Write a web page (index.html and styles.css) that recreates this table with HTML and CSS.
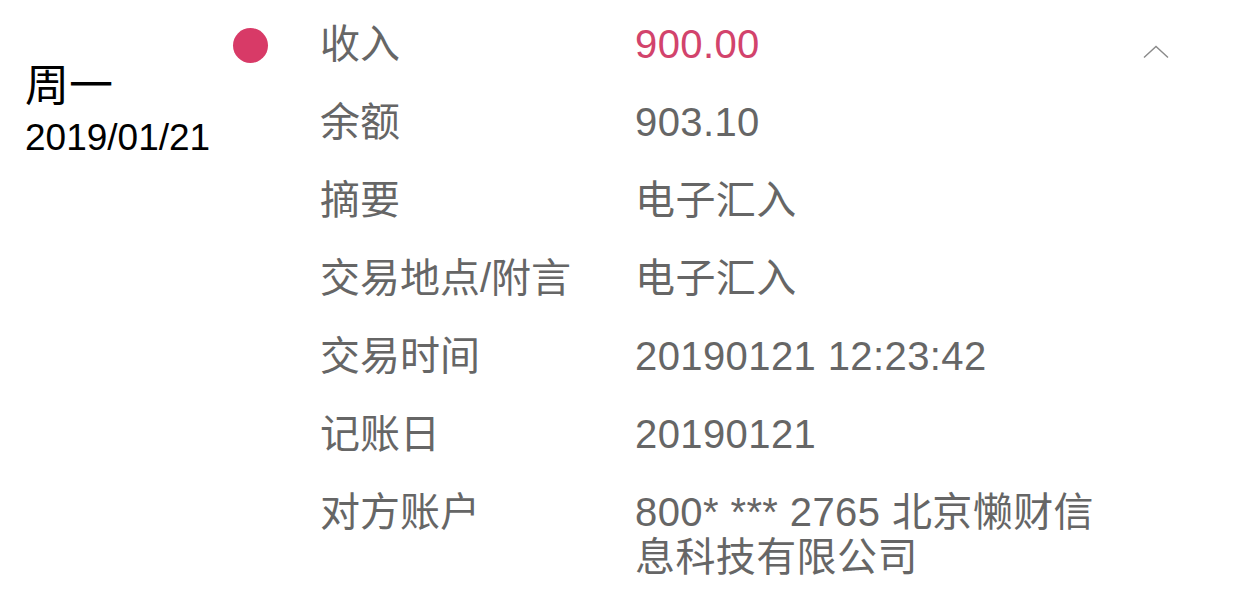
FILE: index.html
```html
<!DOCTYPE html>
<html lang="zh-CN">
<head>
<meta charset="utf-8">
<title>交易详情</title>
<link rel="stylesheet" href="styles.css">
</head>
<body>
<div class="record">
  <div class="day">
    <div class="weekday">周一</div>
    <div class="date">2019/01/21</div>
  </div>
  <div class="dot"></div>
  <div class="details">
    <div class="label">收入</div><div class="value income">900.00</div>
    <div class="label">余额</div><div class="value">903.10</div>
    <div class="label">摘要</div><div class="value">电子汇入</div>
    <div class="label">交易地点/附言</div><div class="value">电子汇入</div>
    <div class="label">交易时间</div><div class="value">20190121 12:23:42</div>
    <div class="label">记账日</div><div class="value">20190121</div>
    <div class="label">对方账户</div><div class="value">800* *** 2765 北京懒财信息科技有限公司</div>
  </div>
  <div class="toggle">
    <svg width="26" height="14" viewBox="0 0 26 14"><polyline points="1,12.5 13,1.5 25,12.5" fill="none" stroke="#8a8a8a" stroke-width="1.4"/></svg>
  </div>
</div>
</body>
</html>
```
FILE: styles.css
```css
html, body {
  margin: 0;
  padding: 0;
  background: #ffffff;
}
body {
  font-family: "Liberation Sans", "Noto Sans CJK SC", sans-serif;
  width: 1242px;
  height: 608px;
  overflow: hidden;
}
.record {
  display: flex;
  align-items: flex-start;
}
.day {
  width: 208px;
  padding-left: 25px;
  padding-top: 60px;
  color: #000;
}
.weekday {
  font-size: 44px;
  line-height: 52px;
}
.date {
  font-size: 37px;
  line-height: 44px;
  margin-top: 4px;
}
.dot {
  width: 35px;
  height: 35px;
  border-radius: 50%;
  background: #d83a67;
  margin-top: 28px;
  margin-right: 52px;
  flex: none;
}
.details {
  display: grid;
  grid-template-columns: 315px 470px;
  row-gap: 33px;
  padding-top: 22px;
  font-size: 40px;
  line-height: 45px;
  color: #666666;
}
.value {
  letter-spacing: 0.4px;
}
.value.income {
  color: #d2436c;
}
.toggle {
  margin-left: 38px;
  margin-top: 45px;
  display: flex;
}
```
